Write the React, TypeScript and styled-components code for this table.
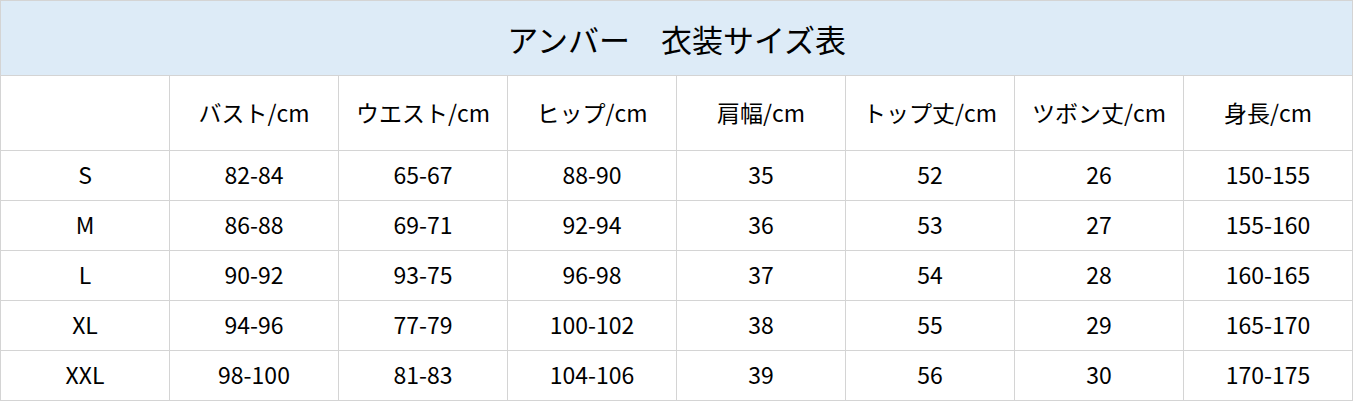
import styled, { createGlobalStyle } from "styled-components";

const GlobalStyle = createGlobalStyle`
  html, body {
    margin: 0;
    padding: 0;
    background: #ffffff;
  }
  body {
    font-family: "Noto Sans CJK JP", "Noto Sans", sans-serif;
    color: #000000;
  }
`;

const columns = ["バスト/cm", "ウエスト/cm", "ヒップ/cm", "肩幅/cm", "トップ丈/cm", "ツボン丈/cm", "身長/cm"];

const rows = [
  { size: "S", values: ["82-84", "65-67", "88-90", "35", "52", "26", "150-155"] },
  { size: "M", values: ["86-88", "69-71", "92-94", "36", "53", "27", "155-160"] },
  { size: "L", values: ["90-92", "93-75", "96-98", "37", "54", "28", "160-165"] },
  { size: "XL", values: ["94-96", "77-79", "100-102", "38", "55", "29", "165-170"] },
  { size: "XXL", values: ["98-100", "81-83", "104-106", "39", "56", "30", "170-175"] },
];

const SizeTable = styled.table`
  border-collapse: collapse;
  table-layout: fixed;
  width: 1353px;
  border: 1px solid #d4d4d4;
`;

const TitleCell = styled.th`
  height: 75px;
  padding: 0;
  box-sizing: border-box;
  background: #ddebf7;
  font-family: "Noto Sans CJK JP", sans-serif;
  font-size: 31px;
  font-weight: 400;
  text-align: center;
  vertical-align: middle;
  border: 1px solid #d4d4d4;
  border-bottom: none;
`;

const HeadCell = styled.th`
  height: 75px;
  padding: 0 0 3px;
  box-sizing: border-box;
  font-size: 23px;
  font-weight: 400;
  text-align: center;
  vertical-align: middle;
  border: 1px solid #d4d4d4;
  white-space: nowrap;
`;

const Cell = styled.td`
  height: 50px;
  padding: 0 0 4px;
  box-sizing: border-box;
  font-size: 23px;
  text-align: center;
  vertical-align: middle;
  border: 1px solid #d4d4d4;
`;

export default function App() {
  return (
    <>
      <GlobalStyle />
      <SizeTable>
        <colgroup>
          {Array.from({ length: 8 }).map((_, i) => (
            <col key={i} style={{ width: 169 }} />
          ))}
        </colgroup>
        <thead>
          <tr>
            <TitleCell colSpan={8}>アンバー　衣装サイズ表</TitleCell>
          </tr>
          <tr>
            <HeadCell />
            {columns.map((c) => (
              <HeadCell key={c}>{c}</HeadCell>
            ))}
          </tr>
        </thead>
        <tbody>
          {rows.map((r) => (
            <tr key={r.size}>
              <Cell>{r.size}</Cell>
              {r.values.map((v, i) => (
                <Cell key={i}>{v}</Cell>
              ))}
            </tr>
          ))}
        </tbody>
      </SizeTable>
    </>
  );
}
